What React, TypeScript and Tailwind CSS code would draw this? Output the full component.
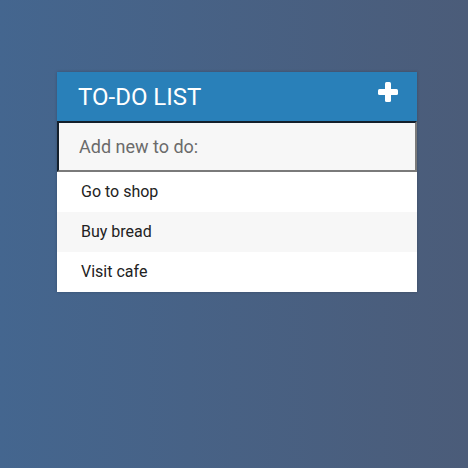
import React from 'react';

const todos = ['Go to shop', 'Buy bread', 'Visit cafe'];

const PlusIcon: React.FC = () => (
  <svg width="20" height="20" viewBox="0 0 20 20" className="block">
    <rect x="7" y="0" width="6" height="20" rx="1.5" fill="#fff" />
    <rect x="0" y="7" width="20" height="6" rx="1.5" fill="#fff" />
  </svg>
);

const App: React.FC = () => {
  return (
    <div
      className="w-[468px] h-[468px] bg-gradient-to-r from-[#44668f] to-[#4b5c79] pt-[72px] pl-[57px]"
      style={{ fontFamily: 'Roboto, "Liberation Sans", sans-serif' }}
    >
      <div className="w-[360px] bg-white shadow-[0_0_3px_rgba(0,0,0,0.2)]">
        {/* Header */}
        <div className="h-[49px] bg-[#2980b9] flex items-center justify-between pl-[21px] pr-[19px]">
          <h1 className="text-[24px] leading-none text-white font-normal">TO-DO LIST</h1>
          <button className="-mt-[9px]">
            <PlusIcon />
          </button>
        </div>

        {/* Input */}
        <input
          placeholder="Add new to do:"
          className="block w-full h-[51px] bg-[#f7f7f7] text-[18px] pl-[20px] outline-none border-2 border-t-[#14202c] border-l-[#14202c] border-b-[#7a7a7a] border-r-[#7a7a7a] placeholder:text-[#6b6b6b]"
        />

        {/* List */}
        <ul>
          {todos.map((t, i) => (
            <li
              key={t}
              className={`h-[40px] flex items-center pl-[24px] text-[16px] text-[#222] ${
                i % 2 === 1 ? 'bg-[#f7f7f7]' : 'bg-white'
              }`}
            >
              {t}
            </li>
          ))}
        </ul>
      </div>
    </div>
  );
};

export default App;
